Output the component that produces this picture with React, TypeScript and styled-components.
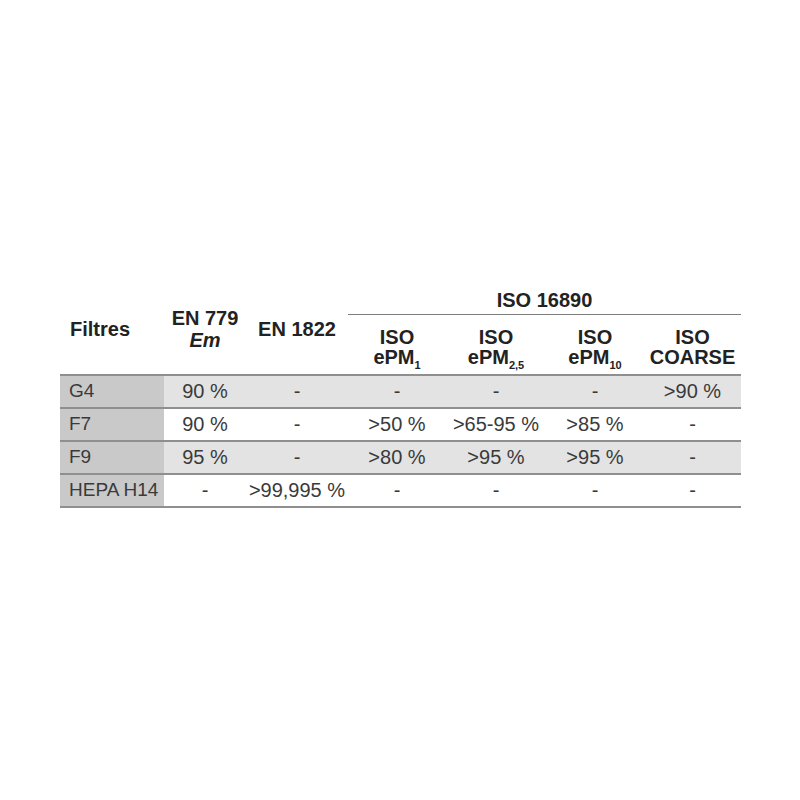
import styled, { createGlobalStyle } from "styled-components";

const GlobalStyle = createGlobalStyle`
  html, body {
    margin: 0;
    padding: 0;
    background: #ffffff;
  }
  body {
    font-family: "Liberation Sans", Arial, sans-serif;
  }
`;

const Page = styled.div`
  width: 800px;
  height: 800px;
  padding: 285px 0 0 60px;
  box-sizing: border-box;
`;

const Table = styled.table`
  border-collapse: collapse;
  table-layout: fixed;
  width: 681px;
  color: #333;
`;

const HeadCell = styled.th<{ $left?: boolean; $group?: boolean }>`
  font-size: 20px;
  font-weight: bold;
  line-height: 22px;
  color: #222;
  padding: 0;
  text-align: ${(p) => (p.$left ? "left" : "center")};
  padding-left: ${(p) => (p.$left ? "10px" : "0")};
  vertical-align: middle;
  white-space: nowrap;
  ${(p) => p.$group && "height: 29px; border-bottom: 1.5px solid #7d7d7d;"}
`;

const SubHead = styled.th`
  font-size: 20px;
  font-weight: bold;
  line-height: 20px;
  color: #222;
  padding: 12px 0 0;
  height: 60px;
  box-sizing: border-box;
  text-align: center;
  vertical-align: top;
  white-space: nowrap;
`;

const Sub = styled.sub`
  font-size: 11px;
  line-height: 0;
  vertical-align: -5px;
`;

const HeadRow = styled.tr`
  border-bottom: 2px solid #8f8f8f;
`;

const Row = styled.tr<{ $shade?: boolean }>`
  height: 33px;
  border-bottom: 2px solid #8f8f8f;
  background: ${(p) => (p.$shade ? "#e3e3e3" : "#ffffff")};
`;

const NameCell = styled.td`
  background: #c9c9c9;
  font-size: 19px;
  padding: 0 0 0 9px;
  text-align: left;
  white-space: nowrap;
  color: #3a3a3a;
`;

const Cell = styled.td`
  font-size: 20px;
  padding: 0;
  text-align: center;
  white-space: nowrap;
  color: #3a3a3a;
`;

const widths = [104, 82, 102, 98, 100, 98, 97];

const rows = [
  ["G4", "90 %", "-", "-", "-", "-", ">90 %"],
  ["F7", "90 %", "-", ">50 %", ">65-95 %", ">85 %", "-"],
  ["F9", "95 %", "-", ">80 %", ">95 %", ">95 %", "-"],
  ["HEPA H14", "-", ">99,995 %", "-", "-", "-", "-"],
];

export default function App() {
  return (
    <Page>
      <GlobalStyle />
      <Table>
        <colgroup>
          {widths.map((w, i) => (
            <col key={i} style={{ width: w }} />
          ))}
        </colgroup>
        <thead>
          <tr>
            <HeadCell rowSpan={2} $left>
              Filtres
            </HeadCell>
            <HeadCell rowSpan={2}>
              EN 779
              <br />
              <i>Em</i>
            </HeadCell>
            <HeadCell rowSpan={2}>EN 1822</HeadCell>
            <HeadCell colSpan={4} $group>
              ISO 16890
            </HeadCell>
          </tr>
          <HeadRow>
            <SubHead>
              ISO
              <br />
              ePM<Sub>1</Sub>
            </SubHead>
            <SubHead>
              ISO
              <br />
              ePM<Sub>2,5</Sub>
            </SubHead>
            <SubHead>
              ISO
              <br />
              ePM<Sub>10</Sub>
            </SubHead>
            <SubHead>
              ISO
              <br />
              COARSE
            </SubHead>
          </HeadRow>
        </thead>
        <tbody>
          {rows.map((r, i) => (
            <Row key={r[0]} $shade={i % 2 === 0}>
              <NameCell>{r[0]}</NameCell>
              {r.slice(1).map((v, j) => (
                <Cell key={j}>{v}</Cell>
              ))}
            </Row>
          ))}
        </tbody>
      </Table>
    </Page>
  );
}
